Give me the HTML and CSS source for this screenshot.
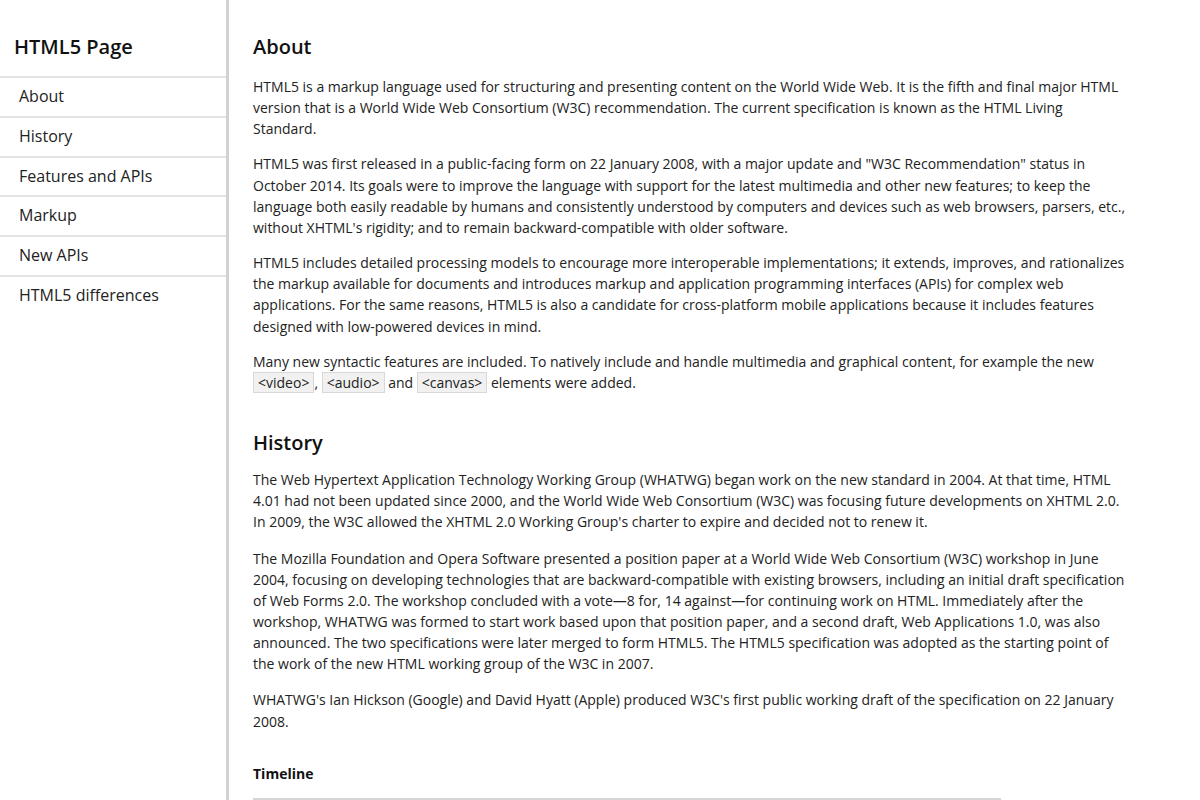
FILE: index.html
```html
<!DOCTYPE html>
<html lang="en">
<head>
<meta charset="utf-8">
<title>HTML5 Page</title>
<link rel="stylesheet" href="styles.css">
</head>
<body>
<div class="layout">
  <aside class="sidebar">
    <h1 class="site-title">HTML5 Page</h1>
    <nav class="nav">
      <a class="nav-item" href="#about">About</a>
      <a class="nav-item" href="#history">History</a>
      <a class="nav-item" href="#features">Features and APIs</a>
      <a class="nav-item" href="#markup">Markup</a>
      <a class="nav-item" href="#apis">New APIs</a>
      <a class="nav-item" href="#diff">HTML5 differences</a>
    </nav>
  </aside>
  <main class="content">
    <section class="section" id="about">
      <h2 class="section-title">About</h2>
      <p>HTML5 is a markup language used for structuring and presenting content on the World Wide Web. It is the fifth and final major HTML version that is a World Wide Web Consortium (W3C) recommendation. The current specification is known as the HTML Living Standard.</p>
      <p>HTML5 was first released in a public-facing form on 22 January 2008, with a major update and "W3C Recommendation" status in October 2014. Its goals were to improve the language with support for the latest multimedia and other new features; to keep the language both easily readable by humans and consistently understood by computers and devices such as web browsers, parsers, etc., without XHTML's rigidity; and to remain backward-compatible with older software.</p>
      <p>HTML5 includes detailed processing models to encourage more interoperable implementations; it extends, improves, and rationalizes the markup available for documents and introduces markup and application programming interfaces (APIs) for complex web applications. For the same reasons, HTML5 is also a candidate for cross-platform mobile applications because it includes features designed with low-powered devices in mind.</p>
      <p>Many new syntactic features are included. To natively include and handle multimedia and graphical content, for example the new <code class="tag">&lt;video&gt;</code>, <code class="tag">&lt;audio&gt;</code> and <code class="tag">&lt;canvas&gt;</code> elements were added.</p>
    </section>
    <section class="section" id="history">
      <h2 class="section-title">History</h2>
      <p>The Web Hypertext Application Technology Working Group (WHATWG) began work on the new standard in 2004. At that time, HTML 4.01 had not been updated since 2000, and the World Wide Web Consortium (W3C) was focusing future developments on XHTML 2.0. In 2009, the W3C allowed the XHTML 2.0 Working Group's charter to expire and decided not to renew it.</p>
      <p>The Mozilla Foundation and Opera Software presented a position paper at a World Wide Web Consortium (W3C) workshop in June 2004, focusing on developing technologies that are backward-compatible with existing browsers, including an initial draft specification of Web Forms 2.0. The workshop concluded with a vote—8 for, 14 against—for continuing work on HTML. Immediately after the workshop, WHATWG was formed to start work based upon that position paper, and a second draft, Web Applications 1.0, was also announced. The two specifications were later merged to form HTML5. The HTML5 specification was adopted as the starting point of the work of the new HTML working group of the W3C in 2007.</p>
      <p>WHATWG's Ian Hickson (Google) and David Hyatt (Apple) produced W3C's first public working draft of the specification on 22 January 2008.</p>
      <h3 class="sub-title">Timeline</h3>
      <div class="timeline"></div>
    </section>
  </main>
</div>
</body>
</html>
```

FILE: styles.css
```css
html, body {
  margin: 0;
  padding: 0;
  background: #fff;
}
body {
  font-family: "Open Sans", "Noto Sans", sans-serif;
  font-size: 14px;
  line-height: 21.15px;
  color: #222;
}
.layout {
  display: flex;
  align-items: stretch;
  min-height: 800px;
}
.sidebar {
  width: 226px;
  flex-shrink: 0;
  border-right: 3px solid #d2d2d2;
}
.site-title {
  margin: 0;
  padding: 33px 14px 16px;
  font-size: 20px;
  line-height: 27px;
  font-weight: 600;
  color: #111;
}
.nav {
  display: flex;
  flex-direction: column;
}
.nav-item {
  display: block;
  border-top: 2px solid #e3e3e3;
  padding: 8px 19px 8.8px;
  font-size: 16px;
  line-height: 21px;
  color: #222;
  text-decoration: none;
}
.content {
  flex: 1;
  padding: 33px 0 0 24px;
}
.section {
  width: 874px;
}
.section-title {
  margin: 0 0 15px;
  font-size: 20px;
  line-height: 28px;
  font-weight: 600;
  color: #111;
}
.content p {
  margin: 0 0 14px;
}
.section + .section {
  margin-top: 36px;
}
.section + .section .section-title {
  margin-bottom: 12px;
}
.section + .section p {
  margin-bottom: 15px;
}
.tag {
  font-family: inherit;
  font-size: 14px;
  background: #f1f1f1;
  border: 1px solid #d8d8d8;
  padding: 0 4px;
}
.sub-title {
  margin: 31px 0 14px;
  font-size: 14px;
  line-height: 21px;
  font-weight: 700;
  color: #111;
}
.timeline {
  width: 748px;
  border-top: 2px solid #d6d6d6;
}
```
